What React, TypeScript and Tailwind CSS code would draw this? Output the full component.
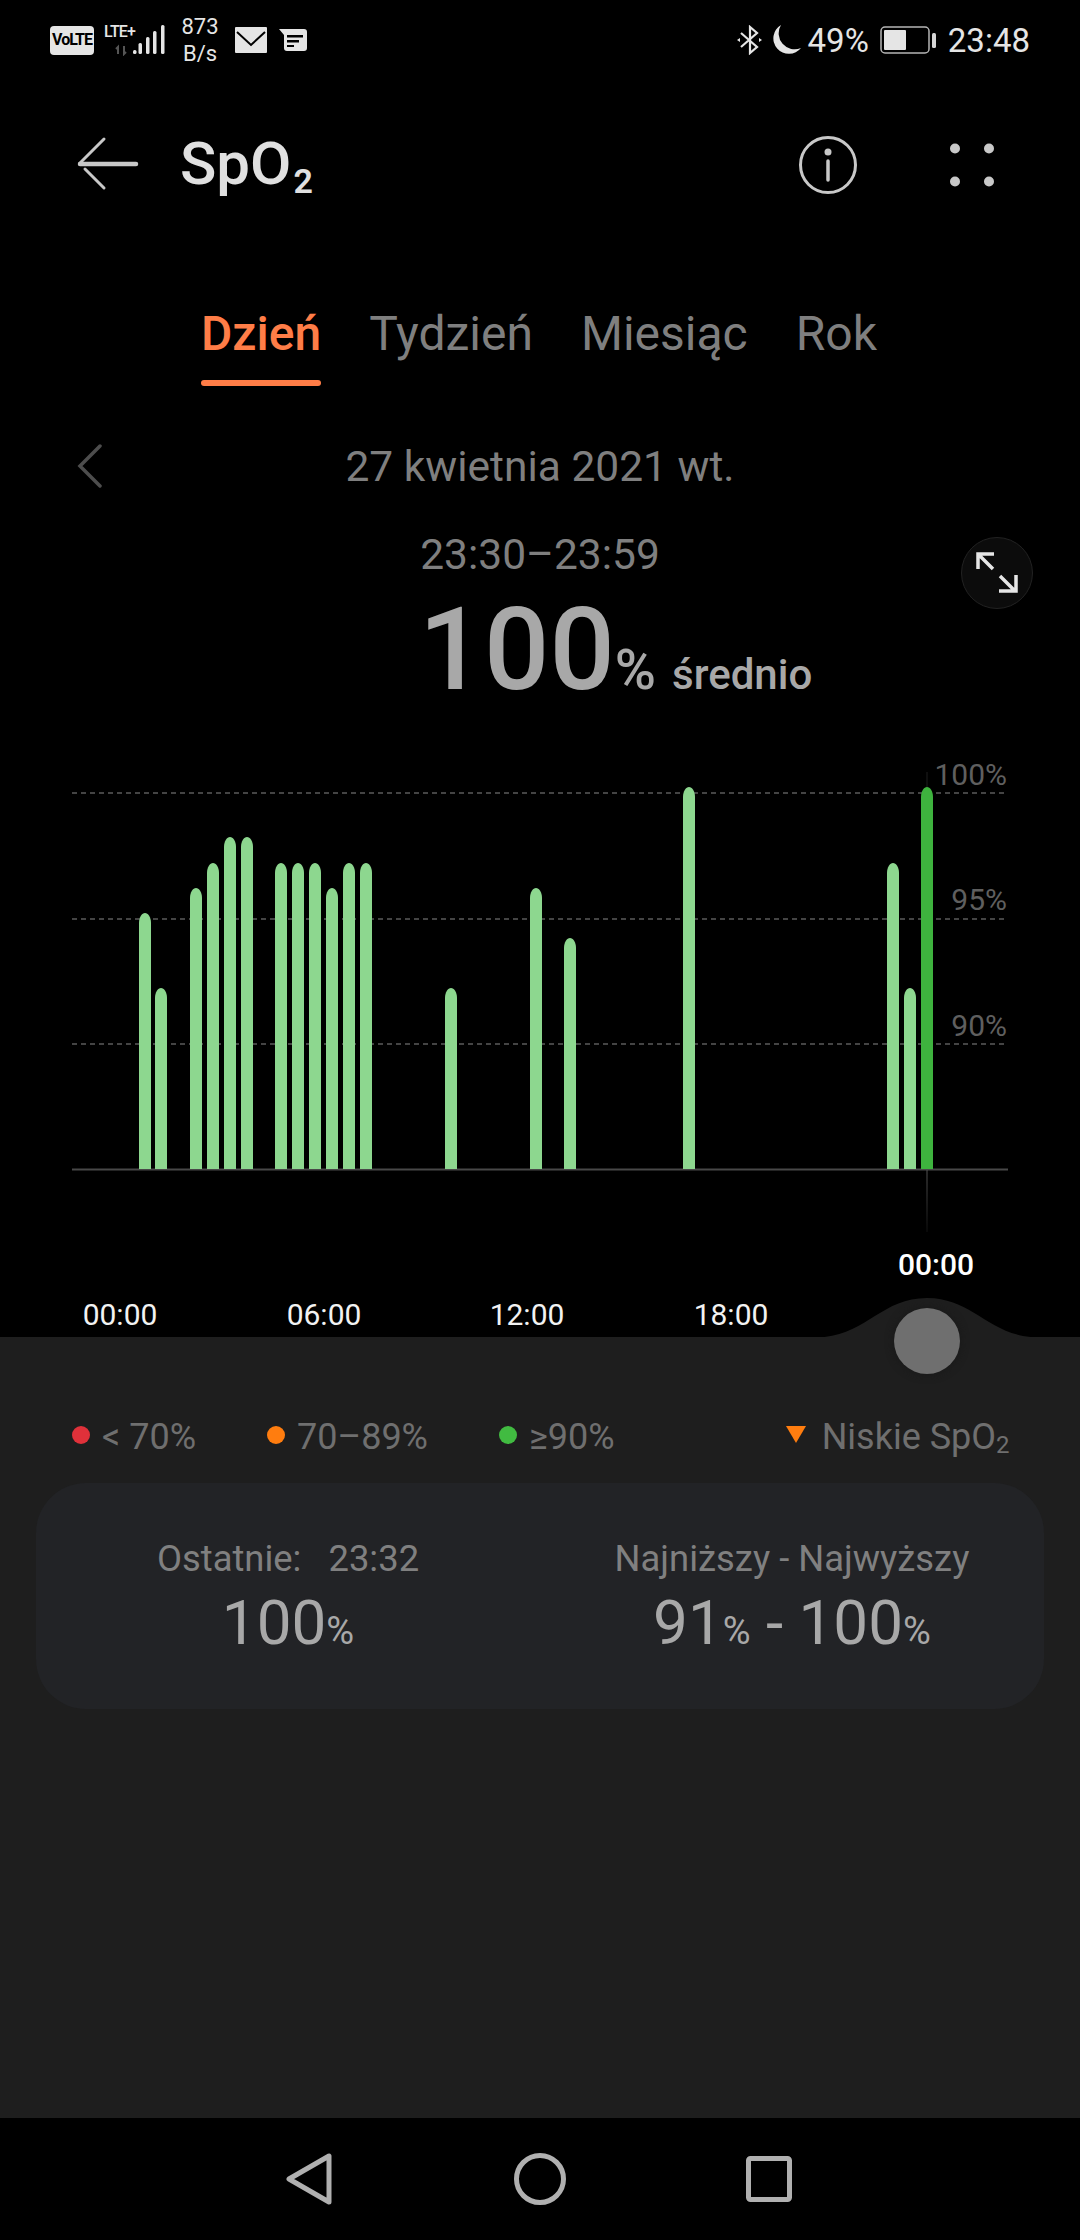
const bars = [
  { x: 145, top: 913 },
  { x: 161, top: 988 },
  { x: 196, top: 888 },
  { x: 213, top: 863 },
  { x: 230, top: 837 },
  { x: 247, top: 837 },
  { x: 281, top: 863 },
  { x: 298, top: 863 },
  { x: 315, top: 863 },
  { x: 332, top: 888 },
  { x: 349, top: 863 },
  { x: 366, top: 863 },
  { x: 451, top: 988 },
  { x: 536, top: 888 },
  { x: 570, top: 938 },
  { x: 689, top: 787 },
  { x: 893, top: 863 },
  { x: 910, top: 988 },
  { x: 927, top: 787, active: true },
];

const CHART_TOP = 760;

function StatusBar() {
  return (
    <div className="flex h-[80px] items-center justify-between px-[50px] text-[#e5e5e5]">
      <div className="flex items-center">
        <div className="flex h-[29px] w-[44px] items-center justify-center rounded-[4px] bg-[#e5e5e5] text-[16px] font-bold tracking-[-1px] text-black">
          VoLTE
        </div>
        <div className="relative ml-[10px] h-[32px] w-[62px]">
          <span className="absolute left-0 top-[-1px] text-[16px] font-medium leading-[18px] tracking-[-0.8px]">LTE+</span>
          <svg width="62" height="32" viewBox="0 0 62 32" className="absolute left-0 top-0">
            <path d="M14 30v-7l-2 2M20 22v8l2-2" stroke="#555" strokeWidth="2" fill="none" />
            <rect x="29" y="26" width="3.500" height="4" rx="1.500" fill="#e5e5e5" />
            <rect x="34.500" y="19" width="3.500" height="11" rx="1.500" fill="#e5e5e5" />
            <rect x="42" y="13" width="3.500" height="17" rx="1.500" fill="#e5e5e5" />
            <rect x="49" y="7" width="3.500" height="23" rx="1.500" fill="#e5e5e5" />
            <rect x="57" y="1" width="3.500" height="29" rx="1.500" fill="#e5e5e5" />
          </svg>
        </div>
        <div className="ml-[14px] flex w-[40px] flex-col items-center text-[22px] leading-[27px]">
          <span>873</span>
          <span>B/s</span>
        </div>
        <svg width="32" height="26" viewBox="0 0 32 26" className="ml-[15px]">
          <rect width="32" height="26" fill="#e5e5e5" rx="1" />
          <path d="M2 5l14 13L30 5" stroke="#000" strokeWidth="2" fill="none" />
        </svg>
        <svg width="28" height="22" viewBox="0 0 28 22" className="ml-[12px]">
          <path d="M0 0h25a3 3 0 0 1 3 3v16a3 3 0 0 1-3 3H8a3 3 0 0 1-3-3V6z" fill="#e5e5e5" />
          <path d="M8 6h16v2.500H8zM8 11h12v2.500H8zM8 16h7v2H8z" fill="#000" />
        </svg>
      </div>
      <div className="flex items-center">
        <svg width="26" height="30" viewBox="0 0 26 30" fill="none" stroke="#e5e5e5" strokeWidth="2.200" className="mr-[7px]">
          <path d="M4 8l16 14-7 6V2l7 6L4 22" />
          <path d="M0 15l3-2v4zM25 15l-3-2v4z" fill="#e5e5e5" stroke="none" />
        </svg>
        <svg width="32" height="32" viewBox="0 0 32 32" className="mr-[6px]">
          <path d="M11 1A15.500 15.500 0 1 0 31 24A16 16 0 0 1 11 1Z" fill="#e5e5e5" />
        </svg>
        <span className="text-[33px] leading-none">49%</span>
        <svg width="58" height="28" viewBox="0 0 58 28" className="ml-[11px]">
          <rect x="1" y="1" width="48" height="26" rx="4" fill="none" stroke="#b5b5b5" strokeWidth="1.500" />
          <rect x="4" y="4" width="22" height="20" rx="1" fill="#e5e5e5" />
          <rect x="52" y="7" width="4" height="15" rx="1.500" fill="#d5d5d5" />
        </svg>
        <span className="ml-[10px] text-[33px] leading-none">23:48</span>
      </div>
    </div>
  );
}

function Header() {
  return (
    <div className="mt-[45px] flex h-[80px] items-center text-[#e0e0e0]">
      <svg width="62" height="58" viewBox="0 0 62 58" fill="none" stroke="#c8c8c8" strokeLinecap="round" className="ml-[77px]">
        <path d="M3 28h56" strokeWidth="4.500" />
        <path d="M3 27L27 3M8 33l19 19" strokeWidth="3" />
      </svg>
      <div className="relative top-[3px] ml-[41px] flex items-baseline text-[60px] font-medium leading-[80px]">
        SpO<span className="relative top-[9px] ml-[2px] text-[34px] font-semibold">2</span>
      </div>
      <svg width="60" height="60" viewBox="0 0 60 60" fill="none" stroke="#c8c8c8" strokeLinecap="round" className="ml-auto">
        <circle cx="30" cy="30" r="27.500" strokeWidth="3" />
        <circle cx="30" cy="17" r="3.500" fill="#c8c8c8" stroke="none" />
        <path d="M30 26v19" strokeWidth="3.500" />
      </svg>
      <svg width="44" height="44" viewBox="0 0 44 44" fill="#c8c8c8" className="ml-[92px] mr-[86px]">
        <circle cx="5" cy="5.500" r="5" />
        <circle cx="39" cy="5.500" r="5" />
        <circle cx="5" cy="38.500" r="5" />
        <circle cx="39" cy="38.500" r="5" />
      </svg>
    </div>
  );
}

function Tabs() {
  return (
    <div className="mt-[97px] flex justify-center gap-[48px] pr-[2px] text-[48px] leading-[64px] text-[#7f7f7f]">
      <div className="relative font-medium text-[#ff7d47]">
        Dzień
        <div className="absolute bottom-[-20px] left-0 h-[6px] w-full rounded-full bg-[#ff7d47]" />
      </div>
      <div>Tydzień</div>
      <div>Miesiąc</div>
      <div>Rok</div>
    </div>
  );
}

function DateRow() {
  return (
    <div className="relative mt-[75px] flex h-[52px] items-center justify-center text-[42.500px] text-[#7f7f7f]">
      <svg width="26" height="44" viewBox="0 0 26 44" fill="none" stroke="#4d4d4d" strokeWidth="3.500" strokeLinecap="round" className="absolute left-[77px] top-[3px]">
        <path d="M23 2L3 22l20 20" />
      </svg>
      27 kwietnia 2021 wt.
    </div>
  );
}

function Summary() {
  return (
    <div className="relative mt-[36px] flex flex-col items-center">
      <div className="text-[42.500px] leading-[52px] text-[#7f7f7f]">23:30–23:59</div>
      <div className="mt-[17px] flex h-[104px] items-baseline pl-[151px] font-medium text-[#a8a8a8]">
        <span className="text-[115px] leading-[104px]">100</span>
        <span className="text-[56px] leading-none">%</span>
        <span className="ml-[16px] text-[42px] leading-none">średnio</span>
      </div>
      <div className="absolute left-[961px] top-[8px] flex h-[72px] w-[72px] items-center justify-center rounded-full border border-[#222] bg-[#0c0c0c]">
        <svg width="42" height="42" viewBox="0 0 42 42" fill="none" stroke="#e6e6e6" strokeWidth="3.500">
          <path d="M2 17V2h16M2 2l15 15M40 23v16H23M39 39L24 24" />
        </svg>
      </div>
    </div>
  );
}

function Chart() {
  return (
    <svg width="1080" height="577" viewBox={`0 ${CHART_TOP} 1080 577`} className="block" style={{ fontFamily: 'Roboto, sans-serif' }}>
      <defs>
        <linearGradient id="cursor" x1="0" y1="0" x2="0" y2="1">
          <stop offset="0" stopColor="#555" />
          <stop offset="1" stopColor="#111" />
        </linearGradient>
      </defs>
      {[793, 919, 1044].map((y) => (
        <line key={y} x1="72" x2="1006" y1={y} y2={y} stroke="#444" strokeWidth="2" strokeDasharray="5 4" />
      ))}
      <line x1="72" x2="1008" y1="1169.500" y2="1169.500" stroke="#484848" strokeWidth="2" />
      <rect x="926.500" y="1170" width="1" height="62" fill="url(#cursor)" />
      <rect x="926.500" y="772" width="1" height="16" fill="#1e1e1e" />
      {bars.map((b) => (
        <path
          key={b.x}
          d={`M${b.x - 6} 1169V${b.top + 10}C${b.x - 6} ${b.top + 4} ${b.x - 3} ${b.top} ${b.x} ${b.top}C${b.x + 3} ${b.top} ${b.x + 6} ${b.top + 4} ${b.x + 6} ${b.top + 10}V1169Z`}
          fill={b.active ? '#3eb33e' : '#8dd78f'}
        />
      ))}
      <g fontSize="30" fill="#5f5f5f" textAnchor="end">
        <text x="1007" y="785">100%</text>
        <text x="1007" y="910">95%</text>
        <text x="1007" y="1036">90%</text>
      </g>
      <g fontSize="30" fill="#f2f2f2" textAnchor="middle">
        <text x="120" y="1325">00:00</text>
        <text x="324" y="1325">06:00</text>
        <text x="527" y="1325">12:00</text>
        <text x="731" y="1325">18:00</text>
        <text x="936" y="1275" fill="#fff" fontWeight="500">00:00</text>
      </g>
      <path
        d="M815 1337.500C865 1337.500 880 1298 927 1298C974 1298 989 1337.500 1040 1337.500Z"
        fill="#1e1e1e"
      />
    </svg>
  );
}

function LegendDot({ color, label, className }: { color: string; label: string; className: string }) {
  return (
    <div className={`flex items-center ${className}`}>
      <span className={`mb-[5px] h-[18px] w-[18px] rounded-full ${color}`} />
      <span className="ml-[12px]">{label}</span>
    </div>
  );
}

function Legend() {
  return (
    <div className="flex h-[60px] items-center text-[36px] text-[#6f6f6f]">
      <LegendDot color="bg-[#e0313a]" label="< 70%" className="ml-[72px]" />
      <LegendDot color="bg-[#ff7d0f]" label="70–89%" className="ml-[71px]" />
      <LegendDot color="bg-[#41bb41]" label="≥90%" className="ml-[71px]" />
      <svg width="20" height="17" viewBox="0 0 20 17" className="mb-[5px] ml-[171px]">
        <path d="M0 0h20L10 17z" fill="#ff7d0f" />
      </svg>
      <div className="ml-[16px] flex items-baseline">
        Niskie SpO<span className="relative top-[4px] text-[24px]">2</span>
      </div>
    </div>
  );
}

function Card() {
  return (
    <div className="mx-[36px] mt-[16px] grid h-[226px] grid-cols-2 rounded-[50px] bg-[#222326] pt-[54px] text-center">
      <div>
        <div className="whitespace-pre text-[36.400px] leading-[44px] text-[#808080]">Ostatnie:   23:32</div>
        <div className="mt-[8px] text-[62px] leading-[68px] text-[#a8a8a8]">
          100<span className="text-[38px]">%</span>
        </div>
      </div>
      <div>
        <div className="text-[36.400px] leading-[44px] text-[#808080]">Najniższy - Najwyższy</div>
        <div className="mt-[8px] text-[62px] leading-[68px] text-[#a8a8a8]">
          91<span className="text-[38px]">%</span> - 100<span className="text-[38px]">%</span>
        </div>
      </div>
    </div>
  );
}

function NavBar() {
  return (
    <div className="flex h-[122px] items-center justify-center bg-black pb-[1px] pr-[2px]">
      <svg width="46" height="52" viewBox="0 0 46 52" fill="none" stroke="#b0b0b0" strokeWidth="5" strokeLinejoin="round">
        <path d="M43 3v46L3 26z" />
      </svg>
      <svg width="52" height="52" viewBox="0 0 52 52" fill="none" stroke="#b0b0b0" strokeWidth="5" className="ml-[182px]">
        <circle cx="26" cy="26" r="23.500" />
      </svg>
      <svg width="46" height="46" viewBox="0 0 46 46" fill="none" stroke="#b0b0b0" strokeWidth="5" strokeLinejoin="round" className="ml-[180px]">
        <rect x="2.500" y="2.500" width="41" height="41" rx="2" />
      </svg>
    </div>
  );
}

export default function App() {
  return (
    <div className="flex h-[2240px] w-[1080px] flex-col overflow-hidden bg-black font-[Roboto,sans-serif]">
      <div className="h-[760px]">
        <StatusBar />
        <Header />
        <Tabs />
        <DateRow />
        <Summary />
      </div>
      <Chart />
      <div className="relative flex-1 bg-[#1e1e1e] pt-[70px]">
        <div className="absolute left-[894px] top-[-29px] h-[66px] w-[66px] rounded-full bg-[#6f6f6f] shadow-[0_0_8px_#181818]" />
        <Legend />
        <Card />
      </div>
      <NavBar />
    </div>
  );
}
